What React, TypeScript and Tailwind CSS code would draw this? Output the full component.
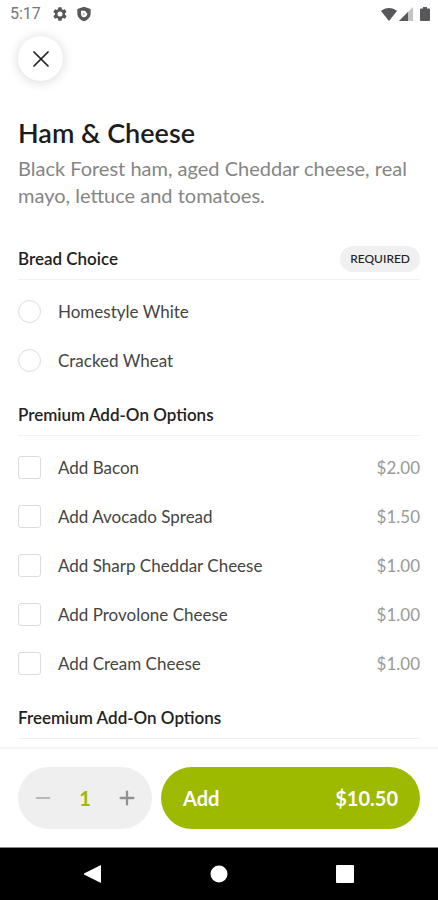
import { useState } from 'react'
import { Minus, Plus, X } from 'lucide-react'

type Option = { name: string; price?: string }

const breads: Option[] = [{ name: 'Homestyle White' }, { name: 'Cracked Wheat' }]

const premiumAddOns: Option[] = [
  { name: 'Add Bacon', price: '$2.00' },
  { name: 'Add Avocado Spread', price: '$1.50' },
  { name: 'Add Sharp Cheddar Cheese', price: '$1.00' },
  { name: 'Add Provolone Cheese', price: '$1.00' },
  { name: 'Add Cream Cheese', price: '$1.00' },
]

function StatusBar() {
  return (
    <div className="flex h-7 shrink-0 items-center justify-between pr-2 pl-[10px] text-[#58585a]">
      <div className="flex items-center">
        <span className="font-[Roboto,sans-serif] text-base text-[#77777a]">5:17</span>
        <svg viewBox="0 0 24 24" className="ml-[11px] size-4" fill="currentColor">
          <path
            fillRule="evenodd"
            d="M19.4 13c.1-.6.1-1.400 0-2l2.100-1.700c.2-.1.3-.4.1-.6l-2-3.500c-.1-.2-.4-.3-.6-.2l-2.500 1c-.5-.4-1.100-.7-1.700-1l-.4-2.600c0-.2-.2-.4-.5-.4h-4c-.2 0-.4.200-.5.400L9 5c-.6.300-1.200.600-1.700 1l-2.500-1c-.2-.1-.5 0-.6.200l-2 3.500c-.1.200-.1.500.1.600L4.500 11c-.1.600-.1 1.400 0 2l-2.200 1.700c-.2.100-.3.400-.1.600l2 3.500c.1.200.4.300.6.200l2.500-1c.5.400 1.100.7 1.700 1l.4 2.600c0 .2.200.4.500.4h4c.2 0 .4-.2.500-.4L14.900 19c.6-.3 1.200-.6 1.700-1l2.500 1c.2.100.5 0 .6-.2l2-3.500c.1-.2.100-.5-.1-.6L19.400 13ZM12 15.800a3.800 3.800 0 1 1 0-7.600 3.800 3.800 0 0 1 0 7.600Z"
          />
        </svg>
        <svg viewBox="0 0 24 24" className="ml-2 size-4" fill="currentColor">
          <path
            fillRule="evenodd"
            d="M12 1 2 4.500V11c0 5.800 4.500 10.600 10 12 5.500-1.400 10-6.200 10-12V4.500L12 1ZM7.500 7h6l3.500 4.500c0 3-2.500 5-5.500 5.500-2.500-.7-4-3-4-5.500V7Z"
          />
          <path d="M10 9.500 14 12l-4 2.500Z" opacity="0.4" />
        </svg>
      </div>
      <div className="flex items-center">
        <svg viewBox="0 0 16 13" className="h-[13px] w-4" fill="currentColor">
          <path d="M8 13 0 3C2.200 1 5 0 8 0s5.800 1 8 3L8 13Z" />
        </svg>
        <svg viewBox="0 0 14 14" className="ml-[2px] size-[14px]">
          <path d="M14 0v14H0L14 0Z" fill="#c4c4c4" />
          <path d="M9 5v9H0l9-9Z" fill="currentColor" />
        </svg>
        <svg viewBox="0 0 10 14" className="ml-[7px] h-[14px] w-[10px]" fill="currentColor">
          <path d="M3 0h4v1.500h2q1 0 1 1V13q0 1-1 1H1q-1 0-1-1V2.500q0-1 1-1h2Z" />
        </svg>
      </div>
    </div>
  )
}

function SectionHeader({ title, required }: { title: string; required?: boolean }) {
  return (
    <div className="flex h-[41px] items-center justify-between border-b border-[#f0f0f0]">
      <h2 className="text-[17px] font-semibold text-[#222]">{title}</h2>
      {required && (
        <span className="rounded-full bg-[#f0f0f0] px-[10px] py-1 text-xs leading-[18px] font-medium text-[#222]">
          REQUIRED
        </span>
      )}
    </div>
  )
}

function OptionList({ type, group, options }: { type: 'radio' | 'checkbox'; group: string; options: Option[] }) {
  return (
    <div className="pt-[7px] pb-[10px]">
      {options.map((option) => (
        <label key={option.name} className="flex h-[49px] items-center gap-[17px]">
          <input
            type={type}
            name={group}
            className={
              type === 'radio'
                ? 'size-[23px] shrink-0 appearance-none rounded-full border border-[#dcdcdc] checked:border-[7px] checked:border-[#9db900]'
                : 'size-[23px] shrink-0 appearance-none rounded-[3px] border border-[#dcdcdc] checked:bg-[#9db900]'
            }
          />
          <span className="flex-1 text-[17px] text-[#444]">{option.name}</span>
          {option.price && <span className="text-[17px] text-[#999]">{option.price}</span>}
        </label>
      ))}
    </div>
  )
}

function OrderBar() {
  const [quantity, setQuantity] = useState(1)

  return (
    <div className="flex shrink-0 gap-[9px] border-t-2 border-[#f5f5f5] px-[18px] py-[18px]">
      <div className="flex h-[62px] w-[134px] items-center justify-between rounded-full bg-[#efefef] px-[14px]">
        <button
          type="button"
          aria-label="Decrease quantity"
          className="text-[#b8b8b8]"
          onClick={() => setQuantity(Math.max(1, quantity - 1))}
        >
          <Minus size={22} strokeWidth={2} />
        </button>
        <span className="text-xl font-bold text-[#9db900]">{quantity}</span>
        <button
          type="button"
          aria-label="Increase quantity"
          className="text-[#929292]"
          onClick={() => setQuantity(quantity + 1)}
        >
          <Plus size={22} strokeWidth={2.5} />
        </button>
      </div>
      <button
        type="button"
        className="flex h-[62px] flex-1 items-center justify-between rounded-full bg-[#9db900] px-[22px] text-xl font-bold text-white"
      >
        <span>Add</span>
        <span>${(10.5 * quantity).toFixed(2)}</span>
      </button>
    </div>
  )
}

function NavigationBar() {
  return (
    <nav className="flex h-[53px] shrink-0 items-center justify-center gap-[108px] border-t border-[#888] bg-black text-white">
      <button type="button" aria-label="Back">
        <svg viewBox="0 0 18 18" className="size-[18px]" fill="currentColor">
          <path d="M17 0v18L0 9.500v-1L17 0Z" />
        </svg>
      </button>
      <button type="button" aria-label="Home">
        <svg viewBox="0 0 18 18" className="size-[18px]" fill="currentColor">
          <circle cx="9" cy="9" r="8.500" />
        </svg>
      </button>
      <button type="button" aria-label="Recent apps">
        <svg viewBox="0 0 18 18" className="size-[18px]" fill="currentColor">
          <rect width="18" height="18" rx="1" />
        </svg>
      </button>
    </nav>
  )
}

export default function App() {
  return (
    <div className="flex h-screen flex-col bg-white font-[Lato,sans-serif]">
      <StatusBar />
      <main className="min-h-0 flex-1 overflow-hidden px-[18px] pt-2">
        <button
          type="button"
          aria-label="Close"
          className="flex size-[45px] items-center justify-center rounded-full bg-white text-[#222] shadow-[0_1px_12px_rgba(0,0,0,0.16)]"
        >
          <X size={28} strokeWidth={1.5} />
        </button>
        <h1 className="mt-9 text-[27px] leading-8 font-semibold text-[#1c1c1c]">Ham &amp; Cheese</h1>
        <p className="mt-[6px] mb-[30px] text-xl leading-[27px] text-[#858585]">
          Black Forest ham, aged Cheddar cheese, real mayo, lettuce and tomatoes.
        </p>
        <SectionHeader title="Bread Choice" required />
        <OptionList type="radio" group="bread" options={breads} />
        <SectionHeader title="Premium Add-On Options" />
        <OptionList type="checkbox" group="premium" options={premiumAddOns} />
        <SectionHeader title="Freemium Add-On Options" />
      </main>
      <OrderBar />
      <NavigationBar />
    </div>
  )
}
